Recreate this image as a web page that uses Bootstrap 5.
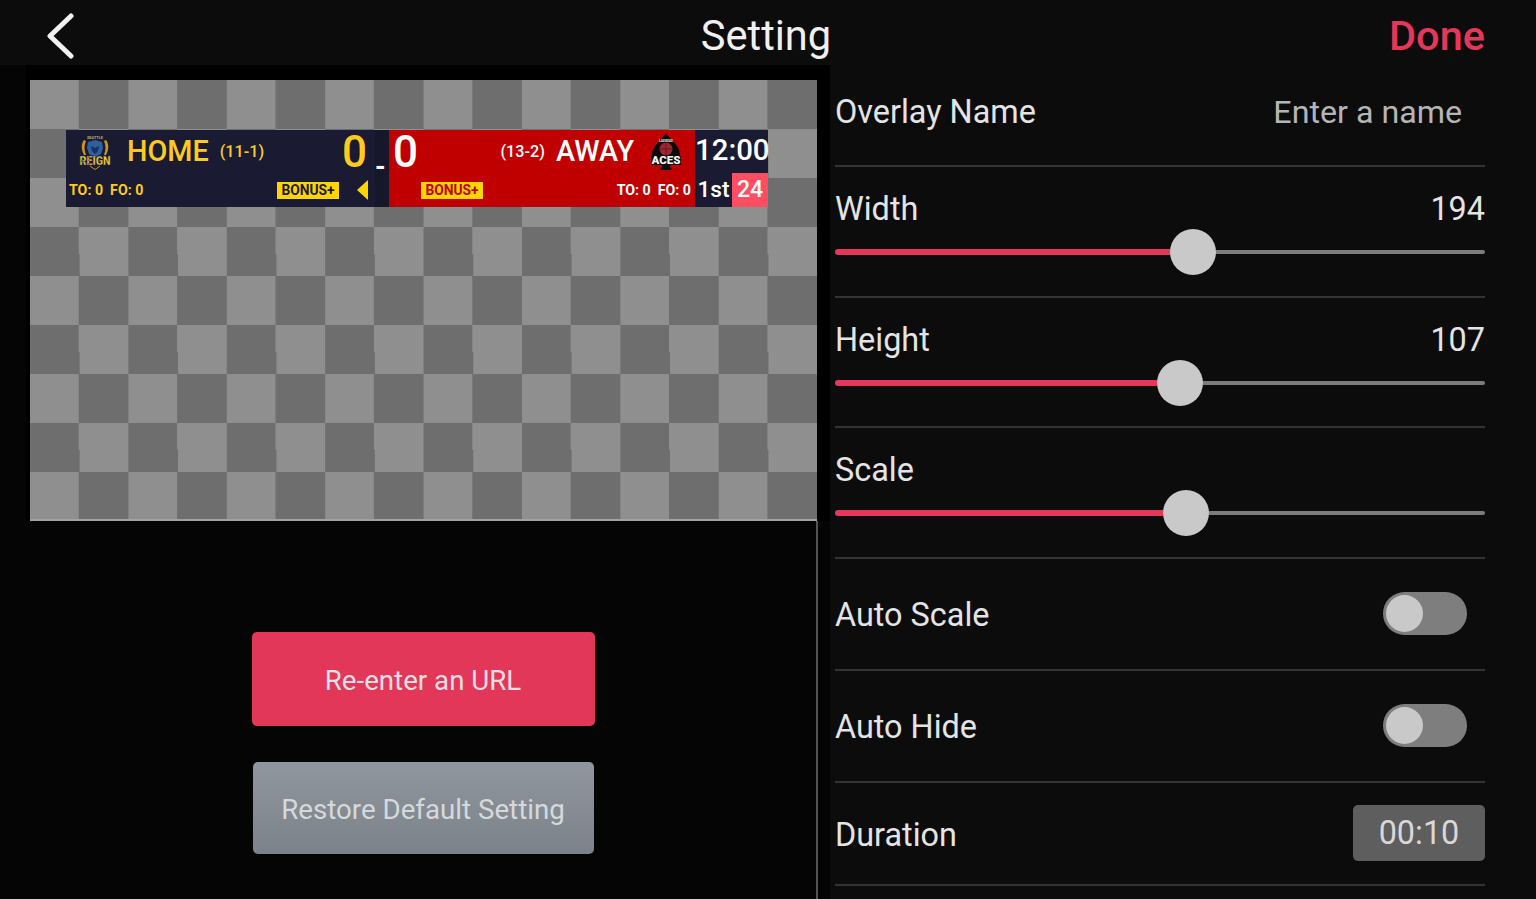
<!DOCTYPE html>
<html lang="en">
<head>
    <meta charset="UTF-8">
    <title>Setting</title>
    <link href="https://cdn.jsdelivr.net/npm/bootstrap@5.3.2/dist/css/bootstrap.min.css" rel="stylesheet">
    <style>
        body {
            background: #0c0c0d;
            color: #e4e4e4;
            font-family: Roboto, "Liberation Sans", sans-serif;
            height: 899px;
            overflow: hidden;
        }
        .top-bar { height: 65px; padding: 0 51px 0 47px; background: #0c0c0d; }
        .top-bar > div { width: 200px; }
        .back-arrow { margin-top: 11px; }
        .page-title { font-size: 41.6px; color: #f0f0f0; line-height: 72px; }
        .done-link { font-size: 41.5px; font-weight: 500; color: #e5375a; line-height: 72px; text-align: right; }
        .left-side { width: 830px; height: 834px; background: #050505; }
        .checker-wrap { background: #000; margin-left: 26px; padding: 15px 13px 0 4px; }
        .checker {
            width: 787px;
            height: 441px;
            padding: 50px 0 0 36px;
            border-bottom: 2px solid #a2a2a2;
            background-color: #6e6e6e;
            background-image: conic-gradient(#6e6e6e 25%, #8f8f8f 0 50%, #6e6e6e 0 75%, #8f8f8f 0);
            background-size: 98.4px 98px;
        }
        .below-preview { width: 818px; height: 378px; border-right: 2px solid #555; padding: 111px 0 0 30px; }
        .action-btn { height: 94px; width: 343px; padding-top: 10px; font-size: 27.7px; color: #e8dfe2; border: 0; border-radius: 5px; }
        .action-btn:hover { color: #e8dfe2; }
        .btn-reenter { background: #e3375a; }
        .btn-reenter:hover { background: #e3375a; }
        .btn-restore { height: 92px; width: 341px; margin-top: 36px; color: #d6d9db; background: linear-gradient(#90969d, #7c8289); }
        .btn-restore:hover { color: #d6d9db; background: #7c8289; }

        /* scoreboard */
        .scoreboard { width: 702px; height: 77px; color: #fff; font-weight: 500; }
        .sb-home { width: 309px; background: #1a1a33; color: #fdcb20; padding-left: 3px; }
        .sb-dash { width: 14px; background: #17172c; padding: 22px 4px 0 0; font-size: 27px; font-weight: 700; text-align: center; line-height: 30px; }
        .sb-away { width: 306px; background: #c00000; }
        .sb-clock { width: 73px; background: #1a1a33; }
        .sb-top { height: 43px; }
        .sb-bottom { height: 34px; }
        .sb-team { font-size: 28.8px; line-height: 41px; }
        .sb-rec { font-size: 16.2px; line-height: 41px; }
        .sb-home .sb-rec { margin-left: 11px; }
        .sb-away .sb-team { margin-left: 11px; }
        .sb-score { font-size: 44px; line-height: 42px; }
        .sb-fouls { font-size: 14.2px; font-weight: 700; line-height: 20px; }
        .sb-bonus { width: 62px; height: 17px; background: #ffd500; font-size: 13.8px; font-weight: 700; line-height: 17px; text-align: center; color: #1a1a33; }
        .sb-away .sb-bonus { color: #c00000; margin-left: 32px; }
        .sb-home .sb-bonus { margin-right: 18px; }
        .logo-home { margin-left: 9px; margin-right: 15px; overflow: visible; }
        .logo-away { margin-left: 16px; margin-right: 13px; overflow: visible; }
        .tri-home { margin-right: 7px; }
        .sb-time { font-size: 29.4px; line-height: 41px; text-align: center; padding-right: 1px; }
        .sb-period { width: 37px; font-size: 22.6px; line-height: 34px; text-align: center; }
        .sb-shot { width: 36px; background: #ff4d61; font-size: 23px; line-height: 34px; text-align: center; }

        /* right column */
        .right-side { width: 650px; margin-left: 5px; }
        .set-row { border-bottom: 2px solid #333; font-size: 32.4px; }
        .set-row span { line-height: 40px; }
        .row-name { height: 102px; padding-top: 27px; }
        .row-range { height: 130.5px; padding-top: 22px; }
        .row-toggle { height: 112px; }
        .row-toggle > span { padding-top: 2px; }
        .row-duration { height: 103px; }
        .row-duration > span { padding-top: 4px; }
        .placeholder-text { color: #b5b5b5; padding-right: 23px; font-size: 32.2px; }
        .slider-line { height: 46px; }
        .slider-fill { height: 6px; background: #e5375a; border-radius: 3px 0 0 3px; }
        .slider-knob { width: 46px; height: 46px; border-radius: 50%; background: #c9c9c9; flex: none; }
        .slider-rest { height: 4px; background: #7d7d7d; border-radius: 0 2px 2px 0; }
        .switch-track { width: 84px; height: 43px; border-radius: 22px; background: #7e7e7e; padding: 3px; margin-right: 18px; }
        .switch-knob { display: block; width: 37px; height: 37px; border-radius: 50%; background: #c9c9c9; }
        .duration-box { width: 132px; height: 56px; background: #5e5e5e; border-radius: 5px; line-height: 56px; text-align: center; color: #d8d8d8; }
    </style>
</head>
<body>
    <header class="top-bar d-flex justify-content-between align-items-start">
        <div>
            <svg width="28" height="48" viewBox="0 0 28 48" class="d-block back-arrow"><path d="M24 5 3 25l21 20" fill="none" stroke="#f0f0f0" stroke-width="5" stroke-linecap="round" stroke-linejoin="round"/></svg>
        </div>
        <div class="page-title text-center">Setting</div>
        <div class="done-link">Done</div>
    </header>

    <main class="d-flex">
        <section class="left-side">
            <div class="checker-wrap">
                <div class="checker">
                    <div class="scoreboard d-flex">
                        <div class="sb-home">
                            <div class="sb-top d-flex align-items-center">
                                <svg width="34" height="36" viewBox="0 0 34 36" class="logo-home flex-shrink-0">
                                    <path d="M6 6C3 10 3 15 6 21h2C6 16 6 11 8 7zM28 6c3 4 3 9 0 15h-2c2-5 2-10 0-14z" fill="#c9981f"/>
                                    <path d="M10 8l7-2 7 2 1 6-2 6-6 3-6-3-2-6z" fill="#2f5f9e"/>
                                    <path d="M13 12l4 2 4-2-1 5-3 3-3-3z" fill="#17335f"/>
                                    <text x="17" y="5" text-anchor="middle" font-size="4" font-weight="700" fill="#b9a866" font-family="Roboto" textLength="16">SEATTLE</text>
                                    <path d="M12 32l5 3.500 5-3.500" fill="none" stroke="#c9981f" stroke-width="1"/>
                                    <text x="17" y="31" text-anchor="middle" font-size="13" font-weight="900" fill="#f6c92b" stroke="#17335f" stroke-width=".4" font-family="Roboto" textLength="31" lengthAdjust="spacingAndGlyphs">REIGN</text>
                                </svg>
                                <span class="sb-team">HOME</span>
                                <span class="sb-rec">(11-1)</span>
                                <span class="sb-score ms-auto me-2">0</span>
                            </div>
                            <div class="sb-bottom d-flex align-items-center">
                                <span class="sb-fouls">TO: 0&nbsp; FO: 0</span>
                                <span class="sb-bonus ms-auto">BONUS+</span>
                                <svg width="11" height="20" viewBox="0 0 11 20" class="tri-home"><path d="M11 0v20L0 10z" fill="#ffd500"/></svg>
                            </div>
                        </div>
                        <div class="sb-dash text-white">-</div>
                        <div class="sb-away">
                            <div class="sb-top d-flex align-items-center">
                                <span class="sb-score ms-1">0</span>
                                <span class="sb-rec ms-auto">(13-2)</span>
                                <span class="sb-team">AWAY</span>
                                <svg width="32" height="38" viewBox="0 0 32 38" class="logo-away flex-shrink-0">
                                    <path d="M16 0C19 6 30 12 30 22c0 6-6 9-11 6 0 3 1 6 3 9H10c2-3 3-6 3-9-5 3-11 0-11-6C2 12 13 6 16 0z" fill="#0a0a0a"/>
                                    <rect x="1" y="23" width="30" height="9" rx="1" fill="#0a0a0a"/>
                                    <circle cx="16" cy="16" r="6.500" fill="#9e2630"/>
                                    <path d="M9.500 16h13M16 9.500v13" stroke="#4a0f16" stroke-width=".6"/>
                                    <text x="16" y="8.500" text-anchor="middle" font-size="3.500" font-weight="700" fill="#d8d8d8" font-family="Roboto" textLength="14">LAS VEGAS</text>
                                    <text x="16" y="31" text-anchor="middle" font-size="10" font-weight="900" fill="#f2f2f2" font-family="Roboto" textLength="29" lengthAdjust="spacingAndGlyphs">ACES</text>
                                </svg>
                            </div>
                            <div class="sb-bottom d-flex align-items-center">
                                <span class="sb-bonus me-auto">BONUS+</span>
                                <span class="sb-fouls me-1">TO: 0&nbsp; FO: 0</span>
                            </div>
                        </div>
                        <div class="sb-clock">
                            <div class="sb-top sb-time">12:00</div>
                            <div class="sb-bottom d-flex">
                                <span class="sb-period">1st</span>
                                <span class="sb-shot">24</span>
                            </div>
                        </div>
                    </div>
                </div>
            </div>
            <div class="below-preview d-flex flex-column align-items-center">
                <button type="button" class="btn action-btn btn-reenter">Re-enter an URL</button>
                <button type="button" class="btn action-btn btn-restore">Restore Default Setting</button>
            </div>
        </section>

        <section class="right-side">
            <div class="set-row row-name d-flex justify-content-between">
                <span>Overlay Name</span>
                <span class="placeholder-text">Enter a name</span>
            </div>
            <div class="set-row row-range">
                <div class="d-flex justify-content-between"><span>Width</span><span>194</span></div>
                <div class="slider-line d-flex align-items-center">
                    <div class="slider-fill" style="width: 335px"></div>
                    <div class="slider-knob"></div>
                    <div class="slider-rest flex-grow-1"></div>
                </div>
            </div>
            <div class="set-row row-range">
                <div class="d-flex justify-content-between"><span>Height</span><span>107</span></div>
                <div class="slider-line d-flex align-items-center">
                    <div class="slider-fill" style="width: 322px"></div>
                    <div class="slider-knob"></div>
                    <div class="slider-rest flex-grow-1"></div>
                </div>
            </div>
            <div class="set-row row-range">
                <div class="d-flex justify-content-between"><span>Scale</span></div>
                <div class="slider-line d-flex align-items-center">
                    <div class="slider-fill" style="width: 328px"></div>
                    <div class="slider-knob"></div>
                    <div class="slider-rest flex-grow-1"></div>
                </div>
            </div>
            <div class="set-row row-toggle d-flex justify-content-between align-items-center">
                <span>Auto Scale</span>
                <div class="switch-track"><span class="switch-knob"></span></div>
            </div>
            <div class="set-row row-toggle d-flex justify-content-between align-items-center">
                <span>Auto Hide</span>
                <div class="switch-track"><span class="switch-knob"></span></div>
            </div>
            <div class="set-row row-duration d-flex justify-content-between align-items-center">
                <span>Duration</span>
                <div class="duration-box">00:10</div>
            </div>
        </section>
    </main>

    <script src="https://cdn.jsdelivr.net/npm/bootstrap@5.3.2/dist/js/bootstrap.bundle.min.js"></script>
</body>
</html>
